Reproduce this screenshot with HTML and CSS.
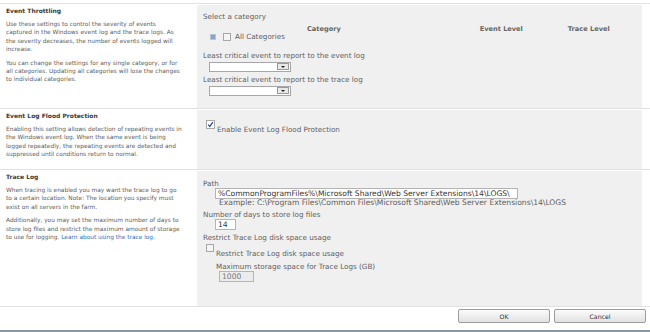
FILE: index.html
```html
<!DOCTYPE html>
<html lang="en">
<head>
    <meta charset="UTF-8">
    <title>Diagnostic Logging</title>
    <link rel="stylesheet" href="styles.css">
</head>
<body>
    <div class="page">
        <div class="section sec-throttling">
            <div class="desc">
                <h3 class="desc-title">Event Throttling</h3>
                <p>Use these settings to control the severity of events<br>captured in the Windows event log and the trace logs. As<br>the severity decreases, the number of events logged will<br>increase.</p>
                <p>You can change the settings for any single category, or for<br>all categories. Updating all categories will lose the changes<br>to individual categories.</p>
            </div>
            <div class="controls">
                <div class="label">Select a category</div>
                <div class="cat-head">
                    <span class="col-category">Category</span>
                    <span class="col-event">Event Level</span>
                    <span class="col-trace">Trace Level</span>
                </div>
                <div class="cat-row">
                    <span class="tree-icon"></span>
                    <span class="checkbox"></span>
                    <span>All Categories</span>
                </div>
                <div class="label label-gap">Least critical event to report to the event log</div>
                <div class="select"><span class="select-btn"></span></div>
                <div class="label label-small-gap">Least critical event to report to the trace log</div>
                <div class="select"><span class="select-btn"></span></div>
            </div>
        </div>

        <div class="section sec-flood">
            <div class="desc">
                <h3 class="desc-title">Event Log Flood Protection</h3>
                <p>Enabling this setting allows detection of repeating events in<br>the Windows event log. When the same event is being<br>logged repeatedly, the repeating events are detected and<br>suppressed until conditions return to normal.</p>
            </div>
            <div class="controls">
                <div class="check-row flood-row">
                    <span class="checkbox checked">
                        <svg width="7" height="7" viewBox="0 0 7 7"><path d="M1.2 3.6 L2.8 5.4 L5.9 1.2" fill="none" stroke="#2b4f9e" stroke-width="1.3"/></svg>
                    </span>
                    <span class="check-label">Enable Event Log Flood Protection</span>
                </div>
            </div>
        </div>

        <div class="section sec-trace">
            <div class="desc">
                <h3 class="desc-title">Trace Log</h3>
                <p>When tracing is enabled you may want the trace log to go<br>to a certain location. Note: The location you specify must<br>exist on all servers in the farm.</p>
                <p>Additionally, you may set the maximum number of days to<br>store log files and restrict the maximum amount of storage<br>to use for logging. <a href="#" class="link">Learn about using the trace log.</a></p>
            </div>
            <div class="controls">
                <div class="label">Path</div>
                <div class="textbox path-box">%CommonProgramFiles%\Microsoft Shared\Web Server Extensions\14\LOGS\</div>
                <div class="example">Example: C:\Program Files\Common Files\Microsoft Shared\Web Server Extensions\14\LOGS</div>
                <div class="label label-small-gap">Number of days to store log files</div>
                <div class="textbox days-box">14</div>
                <div class="label label-small-gap">Restrict Trace Log disk space usage</div>
                <div class="check-row restrict-row">
                    <span class="checkbox"></span>
                    <span class="check-label">Restrict Trace Log disk space usage</span>
                </div>
                <div class="label max-label">Maximum storage space for Trace Logs (GB)</div>
                <div class="textbox size-box">1000</div>
            </div>
        </div>

        <div class="footer">
            <button class="btn btn-ok">OK</button>
            <button class="btn btn-cancel">Cancel</button>
        </div>
    </div>
</body>
</html>
```

FILE: styles.css
```css
body {
    margin: 0;
    padding: 0;
    background-color: #ffffff;
    font-family: "DejaVu Sans", Verdana, sans-serif;
    color: #5b5b5b;
}
.page {
    width: 650px;
    height: 332px;
    padding-top: 3px;
    box-sizing: border-box;
    border-bottom: 2px solid #8796a3;
}
.section {
    display: grid;
    grid-template-columns: 197px 445px;
    border-top: 1px solid #e1e1e1;
}
.sec-throttling {
    height: 104px;
}
.sec-flood {
    height: 60px;
}
.sec-trace {
    height: 136px;
    border-bottom: 1px solid #e1e1e1;
}
.desc {
    padding: 3px 6px 0 6px;
    font-size: 5.85px;
    line-height: 8.3px;
    white-space: nowrap;
}
.desc-title {
    margin: 0 0 5px 0;
    font-size: 6px;
    line-height: 8px;
    font-weight: bold;
    color: #3b3b3b;
}
.desc p {
    margin: 0 0 5.4px 0;
}
.link {
    color: #2a6fb8;
    text-decoration: none;
}
.controls {
    background-color: #f0f0f0;
    margin-top: 1px;
    padding-left: 6px;
    font-size: 7.2px;
    line-height: 8px;
    color: #5e5e5e;
}
.sec-throttling .controls {
    padding-top: 8px;
}
.sec-flood .controls {
    padding-top: 10px;
}
.sec-trace .controls {
    padding-top: 9px;
}
.label {
    white-space: nowrap;
}
.label-gap {
    margin-top: 11px;
}
.label-small-gap {
    margin-top: 4px;
}
.cat-head {
    display: flex;
    margin-top: 4px;
    font-size: 6.6px;
    font-weight: bold;
    color: #666666;
    white-space: nowrap;
}
.col-category {
    margin-left: 104px;
}
.col-event {
    margin-left: 139px;
}
.col-trace {
    margin-left: 45px;
}
.cat-row {
    display: flex;
    align-items: center;
    height: 8px;
    padding-left: 7px;
}
.tree-icon {
    width: 4px;
    height: 4px;
    margin-right: 7px;
    background-color: #8aa3c4;
    border: 1px solid #b8c4d4;
}
.cat-row .checkbox {
    margin-right: 4px;
}
.checkbox {
    display: inline-flex;
    align-items: center;
    justify-content: center;
    width: 6px;
    height: 6px;
    border: 1px solid #a8a8a8;
    background-color: #f4f4f4;
    flex-shrink: 0;
}
.checkbox.checked {
    width: 7px;
    height: 7px;
    background-color: #ffffff;
}
.select {
    position: relative;
    width: 80px;
    height: 8px;
    margin: 2px 0 0 6px;
    border: 1px solid #a6a6a6;
    background-color: #ffffff;
}
.select-btn {
    position: absolute;
    right: 1px;
    top: 0;
    width: 12px;
    height: 7px;
    border: 1px solid #9a9a9a;
    background-color: #e8e8e8;
    box-sizing: border-box;
}
.select-btn::after {
    content: "";
    position: absolute;
    left: 3px;
    top: 2px;
    border-left: 2.5px solid transparent;
    border-right: 2.5px solid transparent;
    border-top: 2.5px solid #222222;
}
.check-row {
    display: flex;
    align-items: flex-start;
    padding-left: 3px;
}
.check-label {
    margin-left: 2px;
    margin-top: 6px;
    white-space: nowrap;
}
.textbox {
    height: 9px;
    margin-left: 12px;
    padding-left: 2px;
    border: 1px solid #b4b4b4;
    background-color: #ffffff;
    color: #333333;
    font-size: 7.6px;
    line-height: 9px;
    white-space: nowrap;
    overflow: hidden;
}
.path-box {
    width: 299px;
}
.example {
    margin-left: 16px;
    font-size: 7.6px;
    white-space: nowrap;
}
.days-box {
    width: 17px;
}
.restrict-row {
    margin-top: 2px;
}
.max-label {
    margin: 5px 0 0 13px;
}
.size-box {
    width: 31px;
    margin-left: 16px;
    background-color: #ececec;
    color: #777777;
}
.footer {
    display: flex;
    justify-content: flex-end;
    gap: 4px;
    padding: 2px 4px 0 0;
}
.btn {
    height: 14px;
    padding: 0;
    font-family: "DejaVu Sans", Verdana, sans-serif;
    font-size: 6.2px;
    color: #333333;
    border: 1px solid #9c9c9c;
    border-radius: 2px;
    background: linear-gradient(#fbfbfb, #e2e2e2);
}
.btn-ok {
    width: 92px;
}
.btn-cancel {
    width: 92px;
}
```
